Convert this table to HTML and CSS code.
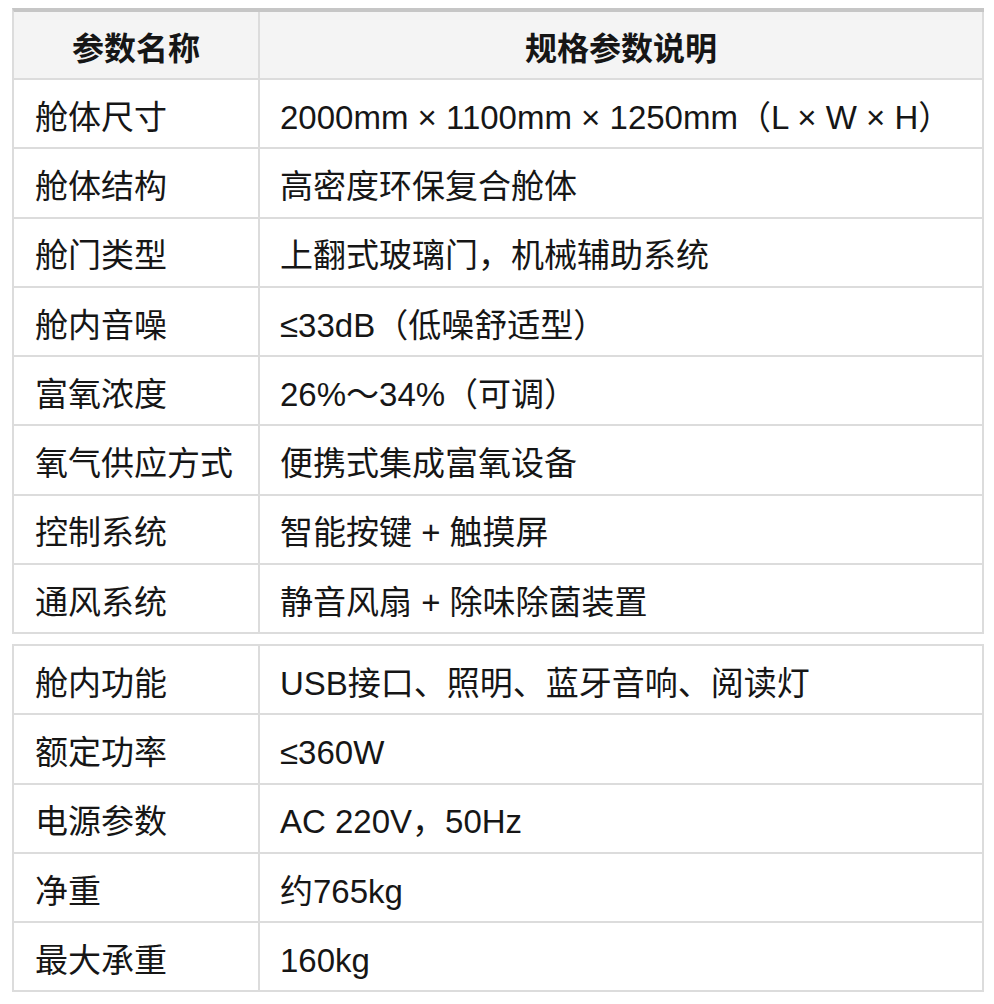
FILE: index.html
```html
<!DOCTYPE html>
<html lang="zh-CN">
<head>
<meta charset="utf-8">
<title>规格参数</title>
<link rel="stylesheet" href="styles.css">
</head>
<body>
<div class="page">
  <table class="spec spec-first">
    <thead>
      <tr><th class="name">参数名称</th><th class="value">规格参数说明</th></tr>
    </thead>
    <tbody>
      <tr><td class="name">舱体尺寸</td><td class="value">2000mm × 1100mm × 1250mm（L × W × H）</td></tr>
      <tr><td class="name">舱体结构</td><td class="value">高密度环保复合舱体</td></tr>
      <tr><td class="name">舱门类型</td><td class="value">上翻式玻璃门，机械辅助系统</td></tr>
      <tr><td class="name">舱内音噪</td><td class="value">≤33dB（低噪舒适型）</td></tr>
      <tr><td class="name">富氧浓度</td><td class="value">26%～34%（可调）</td></tr>
      <tr><td class="name">氧气供应方式</td><td class="value">便携式集成富氧设备</td></tr>
      <tr><td class="name">控制系统</td><td class="value">智能按键 + 触摸屏</td></tr>
      <tr><td class="name">通风系统</td><td class="value">静音风扇 + 除味除菌装置</td></tr>
    </tbody>
  </table>
  <table class="spec spec-second">
    <tbody>
      <tr><td class="name">舱内功能</td><td class="value">USB接口、照明、蓝牙音响、阅读灯</td></tr>
      <tr><td class="name">额定功率</td><td class="value">≤360W</td></tr>
      <tr><td class="name">电源参数</td><td class="value">AC 220V，50Hz</td></tr>
      <tr><td class="name">净重</td><td class="value">约765kg</td></tr>
      <tr><td class="name">最大承重</td><td class="value">160kg</td></tr>
    </tbody>
  </table>
</div>
</body>
</html>
```
FILE: styles.css
```css
html, body {
  margin: 0;
  padding: 0;
  background: #ffffff;
}

.page {
  padding: 8px 10px 0 12px;
  display: flex;
  flex-direction: column;
  gap: 10px;
}

.spec {
  width: 972px;
  border-collapse: separate;
  border-spacing: 0;
  table-layout: fixed;
  border-left: 2px solid #dcdcdc;
  border-top: 2px solid #dcdcdc;
  font-family: "Liberation Sans", "Noto Sans CJK SC", sans-serif;
  font-size: 33px;
  color: #161616;
}

.spec-first {
  border-top: 4px solid #c6c6c6;
}

.spec th,
.spec td {
  box-sizing: border-box;
  height: 69.25px;
  padding: 8px 20px 0;
  border-right: 2px solid #dcdcdc;
  border-bottom: 2px solid #dcdcdc;
  vertical-align: middle;
  text-align: left;
  font-weight: 400;
  white-space: nowrap;
  line-height: 1.2;
}

.spec td.name {
  width: 246px;
  padding-left: 21px;
}

.spec th {
  height: 68px;
  padding: 2px 20px 0;
  background: #f4f4f4;
  font-weight: 700;
  font-size: 32px;
  text-align: center;
  font-family: "Noto Sans CJK SC", sans-serif;
}

.spec th.name {
  width: 246px;
}
```
